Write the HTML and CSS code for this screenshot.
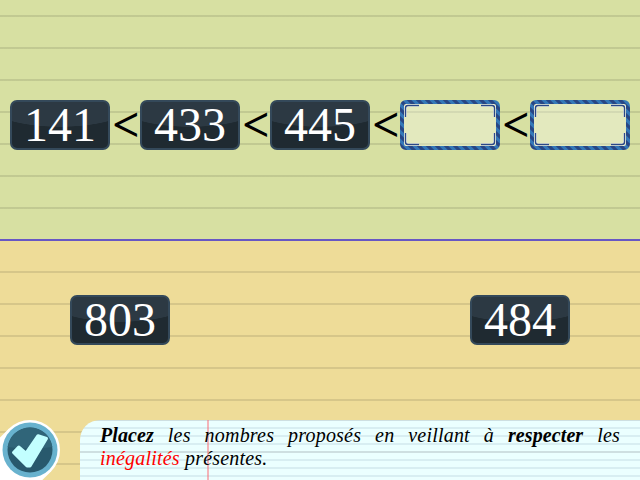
FILE: index.html
```
<!DOCTYPE html>
<html lang="fr">
<head>
<meta charset="utf-8">
<title>Inégalités</title>
<link rel="stylesheet" href="styles.css">
</head>
<body>
<main class="board">
  <section class="answer">
    <div class="tile">141</div><span class="sign">&lt;</span>
    <div class="tile">433</div><span class="sign">&lt;</span>
    <div class="tile">445</div><span class="sign">&lt;</span>
    <svg class="slot" viewBox="0 0 100 50">
      <defs>
        <pattern id="stripes" width="9" height="9" patternUnits="userSpaceOnUse">
          <rect width="9" height="9" fill="#3478b8"/>
          <path d="M-4.500-4.500L13.500 13.500M-4.500 4.500L4.500 13.500M4.500-4.500L13.500 4.500" stroke="#284684" stroke-width="3.200"/>
        </pattern>
      </defs>
      <rect x="2" y="2" width="96" height="46" rx="4" fill="#fff" fill-opacity=".3"/>
      <rect x="2" y="2" width="96" height="46" rx="4" fill="none" stroke="url(#stripes)" stroke-width="4"/>
      <path class="halo" d="M5.500 17V8Q5.500 5.500 8 5.500H19M81 5.500H92Q94.500 5.500 94.500 8V17M94.500 33V42Q94.500 44.500 92 44.500H81M19 44.500H8Q5.500 44.500 5.500 42V33"/>
      <path class="corners" d="M5.500 17V8Q5.500 5.500 8 5.500H19M81 5.500H92Q94.500 5.500 94.500 8V17M94.500 33V42Q94.500 44.500 92 44.500H81M19 44.500H8Q5.500 44.500 5.500 42V33"/>
    </svg><span class="sign">&lt;</span>
    <svg class="slot" viewBox="0 0 100 50">
      <rect x="2" y="2" width="96" height="46" rx="4" fill="#fff" fill-opacity=".3"/>
      <rect x="2" y="2" width="96" height="46" rx="4" fill="none" stroke="url(#stripes)" stroke-width="4"/>
      <path class="halo" d="M5.500 17V8Q5.500 5.500 8 5.500H19M81 5.500H92Q94.500 5.500 94.500 8V17M94.500 33V42Q94.500 44.500 92 44.500H81M19 44.500H8Q5.500 44.500 5.500 42V33"/>
      <path class="corners" d="M5.500 17V8Q5.500 5.500 8 5.500H19M81 5.500H92Q94.500 5.500 94.500 8V17M94.500 33V42Q94.500 44.500 92 44.500H81M19 44.500H8Q5.500 44.500 5.500 42V33"/>
    </svg>
  </section>
  <section class="choices">
    <div class="tile">803</div>
    <div class="tile">484</div>
  </section>
  <footer class="bar">
    <svg class="check" viewBox="0 0 60 60">
      <path d="M8.800 8.800L0 17.600V60H42.400L51.200 51.200z" fill="#fff"/>
      <circle cx="30" cy="30" r="30" fill="#fff"/>
      <circle cx="30" cy="30" r="27.500" fill="#68b2ce"/>
      <circle cx="30" cy="30" r="22.500" fill="#28596d"/>
      <path d="M7.700 27A22.500 22.500 0 0 1 52.300 27Q30 30 7.700 27z" fill="#306579"/>
      <path d="M13.500 32.500L18.700 27L26 33.200L38 15.700L46.500 18.500L30 46L27 46z" fill="#c2ffff" stroke="#c2ffff" stroke-width="3" stroke-linejoin="round"/>
    </svg>
    <p class="note"><b>Placez</b> les nombres proposés en veillant à <b>respecter</b> les <span class="key">inégalités</span> présentes.</p>
  </footer>
</main>
</body>
</html>
```
FILE: styles.css
```
* { box-sizing: border-box; }
body { margin: 0; overflow: hidden; font-family: "Liberation Serif", serif; }
.board {
  width: 640px;
  height: 480px;
  display: grid;
  grid-template-rows: 241px 179px 60px;
  background:
    repeating-linear-gradient(transparent 0 15px, rgba(0, 0, 0, .1) 15px 17px, transparent 17px 32px),
    linear-gradient(#d7e0a2 0 240px, #eedc98 240px);
}
.answer {
  display: flex;
  align-items: flex-start;
  padding: 100px 10px 0;
  border-bottom: 2px solid #6757c4;
}
.tile {
  width: 100px;
  height: 50px;
  border: 2px solid #34495a;
  border-radius: 7px;
  background: radial-gradient(ellipse 78px 26px at 50% -1px, #2c3943 0 98%, transparent 100%), #1f2a31;
  color: #fff;
  font-size: 48px;
  line-height: 46px;
  text-align: center;
}
.sign {
  width: 30px;
  height: 50px;
  padding-left: 2px;
  font-size: 48px;
  font-weight: bold;
  line-height: 50px;
  display: flex;
  justify-content: center;
}
.slot { width: 100px; height: 50px; display: block; }
.halo { fill: none; stroke: #fff; stroke-opacity: .5; stroke-width: 3; }
.corners { fill: none; stroke: #2b4886; stroke-width: 1.4; }
.choices {
  display: flex;
  justify-content: space-between;
  padding: 54px 70px 0;
}
.bar { display: flex; gap: 20px; }
.check { width: 60px; height: 60px; display: block; }
.note {
  flex: 1;
  margin: 0;
  padding: 4px 20px 0;
  border-top-left-radius: 20px;
  background:
    linear-gradient(90deg, transparent 127px, rgba(255, 90, 100, .45) 127px 129px, transparent 129px),
    linear-gradient(#cedfe1 0 1px, transparent 1px 31px, #cedfe1 31px 33px, transparent 33px),
    repeating-linear-gradient(#d8eef2 0 1px, #ebffff 1px 7px, #d8eef2 7px 8px);
  font-size: 20px;
  line-height: 23px;
  letter-spacing: .2px;
  font-style: italic;
  text-align: justify;
}
.note b { letter-spacing: .1px; }
.key { color: #f00; }
```
